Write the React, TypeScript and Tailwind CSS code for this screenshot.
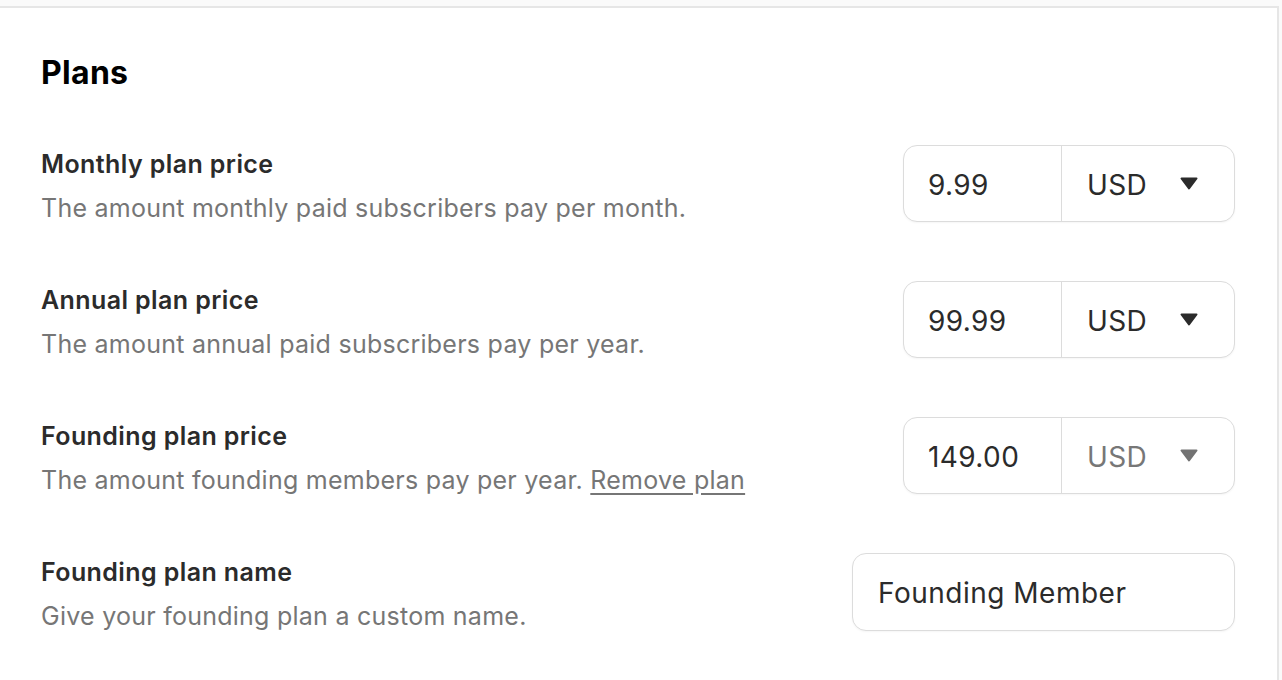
import React from "react";

const font = { fontFamily: "Inter, 'Noto Sans', sans-serif" };

function Caret({ disabled }: { disabled?: boolean }) {
  return (
    <svg width="18" height="13" viewBox="0 0 18 13" className="shrink-0">
      <path
        d="M1.5 1.5 L16.5 1.5 L9 11.5 Z"
        fill={disabled ? "#737373" : "#2b2b2b"}
        stroke={disabled ? "#737373" : "#2b2b2b"}
        strokeWidth="2"
        strokeLinejoin="round"
      />
    </svg>
  );
}

function PriceInput({ value, disabled }: { value: string; disabled?: boolean }) {
  return (
    <div className="flex h-[77px] w-[332px] rounded-[14px] border border-[#dcdcdc] bg-white shadow-[0_1px_2px_rgba(0,0,0,0.04)]">
      <div className="flex w-[158px] items-center border-r border-[#dcdcdc] pl-[24px] pt-[3px] text-[28px] tracking-[0.4px] text-[#2b2b2b]">
        {value}
      </div>
      <div className="flex flex-1 items-center justify-between pl-[25px] pr-[36px]">
        <span
          className={`pt-[3px] text-[28px] tracking-[0.4px] ${disabled ? "text-[#777777]" : "text-[#2b2b2b]"}`}
        >
          USD
        </span>
        <Caret disabled={disabled} />
      </div>
    </div>
  );
}

function Row({
  label,
  desc,
  children,
}: {
  label: string;
  desc: React.ReactNode;
  children: React.ReactNode;
}) {
  return (
    <div className="flex h-[77px] items-center justify-between">
      <div className="flex flex-col pt-[4px]">
        <div className="text-[25px] font-semibold leading-[44px] tracking-[0.4px] text-[#2b2b2b]">{label}</div>
        <div className="text-[25px] leading-[44px] tracking-[0.25px] text-[#767676]">{desc}</div>
      </div>
      {children}
    </div>
  );
}

export default function App() {
  return (
    <div className="h-[680px] w-[1282px] overflow-hidden bg-[#fafafa] pt-[6px]" style={font}>
      <div className="h-full w-[1279px] border-r-2 border-t-2 border-[#e6e6e6] bg-white pl-[41px] pr-[42px]">
        <h1 className="pt-[47px] text-[32px] font-bold leading-[36px] tracking-[0.3px] text-black">Plans</h1>
        <div className="mt-[54px] flex flex-col gap-[59px]">
          <Row label="Monthly plan price" desc="The amount monthly paid subscribers pay per month.">
            <PriceInput value="9.99" />
          </Row>
          <Row label="Annual plan price" desc="The amount annual paid subscribers pay per year.">
            <PriceInput value="99.99" />
          </Row>
          <Row
            label="Founding plan price"
            desc={
              <>
                The amount founding members pay per year.{" "}
                <span className="underline underline-offset-[4px]">Remove plan</span>
              </>
            }
          >
            <PriceInput value="149.00" disabled />
          </Row>
          <Row label="Founding plan name" desc="Give your founding plan a custom name.">
            <div className="flex h-[78px] w-[383px] items-center rounded-[14px] border border-[#dcdcdc] bg-white pl-[25px] pt-[3px] text-[28px] tracking-[0.5px] text-[#2b2b2b] shadow-[0_1px_2px_rgba(0,0,0,0.04)]">
              Founding Member
            </div>
          </Row>
        </div>
      </div>
    </div>
  );
}
